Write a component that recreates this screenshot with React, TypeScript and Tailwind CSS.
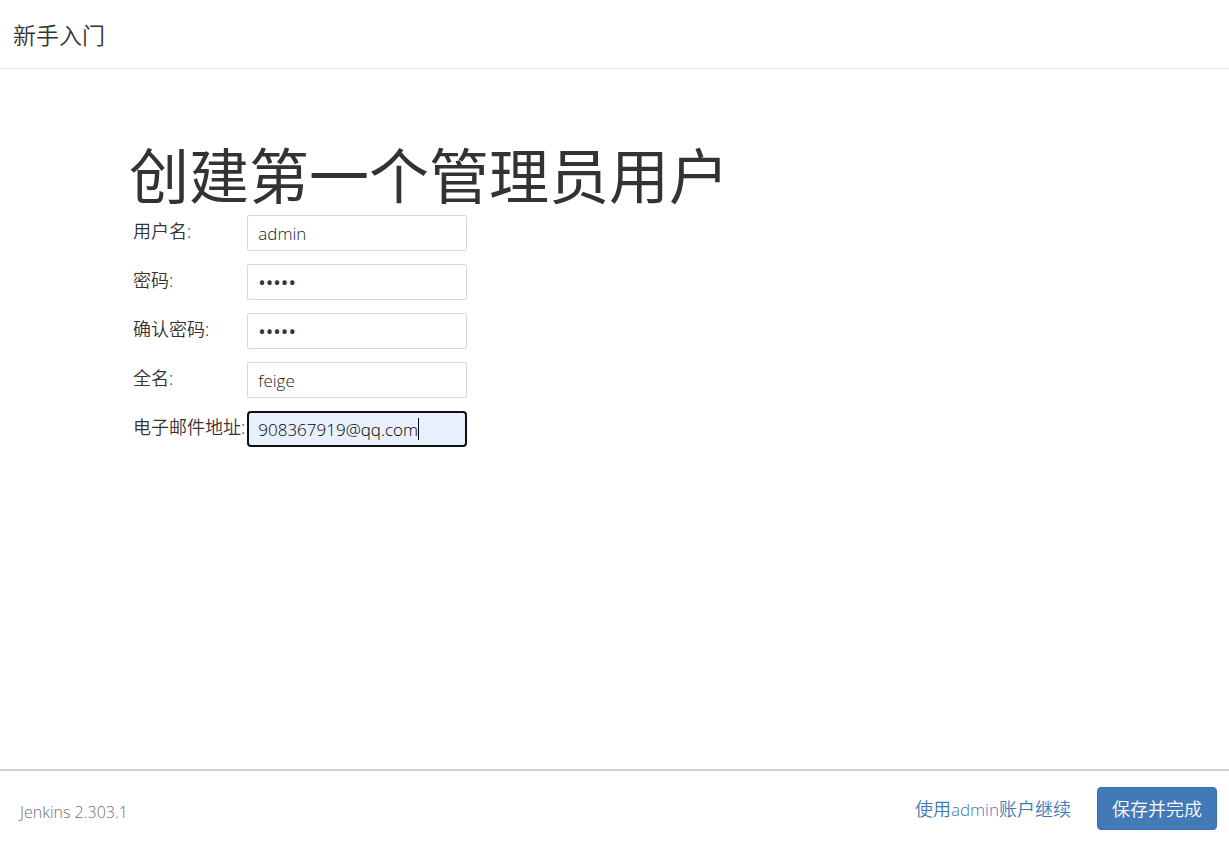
import React, { FC, FocusEvent } from 'react'

type FieldProps = {
  id: string;
  label: string;
  value: string;
  type?: 'text' | 'password';
  active?: boolean;
}

const Field: FC<FieldProps> = ({ id, label, value, type = 'text', active = false }) => {
  const moveCaretToEnd = (e: FocusEvent<HTMLInputElement>) => {
    e.target.setSelectionRange(e.target.value.length, e.target.value.length)
  }

  return (
    <tr>
      <td className="pr-0.5 pb-[13px] align-top">
        <label htmlFor={id} className="block whitespace-nowrap leading-8">{label}:</label>
      </td>
      <td className="pb-[13px] align-top">
        <div className="relative">
          <input
            id={id}
            type={type}
            defaultValue={value}
            autoFocus={active}
            onFocus={moveCaretToEnd}
            className={`block h-9 w-[220px] rounded-xs border border-[#d9d9d9] px-[10px] caret-transparent outline-none focus:rounded-sm focus:border-2 focus:border-[#101010] focus:bg-[#e8f0fe] focus:px-[9px] focus:text-black ${type === 'password' ? 'text-[20px] font-normal' : 'text-[17px] font-light text-[#222]'}`}
          />
          {active && <span className="absolute top-[7px] left-[171px] h-[22px] w-px bg-black" />}
        </div>
      </td>
    </tr>
  )
}

const App = () => {
  return (
    <div className="flex min-h-screen flex-col bg-white font-['Open_Sans','Noto_Sans_CJK_SC',sans-serif] text-lg font-[350] text-[#333]">
      <header className="border-b border-[#e5e5e5] px-[13px] pt-[19px] pb-[17px]">
        <h4 className="text-[23px] leading-8">新手入门</h4>
      </header>

      <main className="flex-1 px-[129px] pt-[69px]">
        <h1 className="text-[60px] leading-[77px] font-normal">创建第一个管理员用户</h1>
        <form id="create-admin">
          <table className="ml-1 border-collapse">
            <tbody>
              <Field id="username" label="用户名" value="admin" />
              <Field id="password1" label="密码" value="admin" type="password" />
              <Field id="password2" label="确认密码" value="admin" type="password" />
              <Field id="fullname" label="全名" value="feige" />
              <Field id="email" label="电子邮件地址" value="908367919@qq.com" active />
            </tbody>
          </table>
        </form>
      </main>

      <footer className="flex items-center justify-between border-t-2 border-[#d0d0d0] pt-4 pr-3 pb-[13px] pl-5">
        <span className="pt-1.5 text-base text-[#707070]">Jenkins 2.303.1</span>
        <div className="flex items-center gap-[26px]">
          <a href="#skip" className="pt-0.5 text-[#4078b8]">使用<span className="text-[17px]">admin</span>账户继续</a>
          <button type="submit" form="create-admin" className="h-[43px] rounded-sm border border-[#3a70ad] bg-[#4279b7] px-[14px] text-white">保存并完成</button>
        </div>
      </footer>
    </div>
  )
}

export default App
